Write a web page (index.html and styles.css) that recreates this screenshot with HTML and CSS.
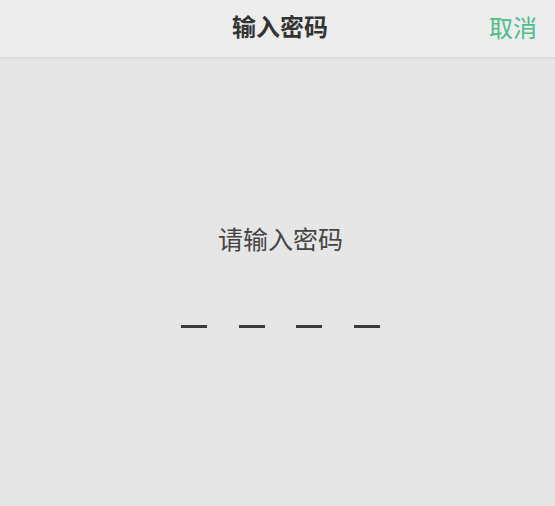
FILE: index.html
```html
<!DOCTYPE html>
<html lang="zh-CN">
<head>
<meta charset="utf-8">
<title>输入密码</title>
<link rel="stylesheet" href="styles.css">
</head>
<body>
<header class="topbar">
  <div class="topbar-side"></div>
  <h1 class="topbar-title">输入密码</h1>
  <div class="topbar-side topbar-right"><button class="cancel">取消</button></div>
</header>
<main class="content">
  <p class="prompt">请输入密码</p>
  <div class="pin">
    <span class="pin-slot"></span>
    <span class="pin-slot"></span>
    <span class="pin-slot"></span>
    <span class="pin-slot"></span>
  </div>
</main>
</body>
</html>
```

FILE: styles.css
```css
html, body {
  margin: 0;
  padding: 0;
  height: 100%;
}
body {
  background: #e6e6e6;
  font-family: "Noto Sans CJK SC", "Noto Sans", sans-serif;
}
.topbar {
  height: 58px;
  box-sizing: border-box;
  background: #ededed;
  border-bottom: 1px solid #d9d9d9;
  box-shadow: 0 1px 2px rgba(0,0,0,0.04);
  display: grid;
  grid-template-columns: 1fr auto 1fr;
  align-items: center;
  padding-left: 5px;
}
.topbar-title {
  margin: 0;
  font-size: 24px;
  font-weight: 700;
  color: #333333;
  line-height: 24px;
  padding-bottom: 6px;
}
.topbar-right {
  display: flex;
  justify-content: flex-end;
}
.cancel {
  border: 0;
  background: none;
  padding: 0 18px 0 0;
  margin: 0;
  font-family: inherit;
  font-size: 24px;
  line-height: 24px;
  color: #4dbd8b;
  padding-bottom: 3px;
}
.content {
  display: flex;
  flex-direction: column;
  align-items: center;
  padding-left: 6px;
}
.prompt {
  margin: 168px 0 0;
  font-size: 25px;
  line-height: 25px;
  color: #444444;
}
.pin {
  display: flex;
  gap: 31.5px;
  margin-top: 74px;
}
.pin-slot {
  width: 26px;
  height: 3px;
  background: #3a3a3a;
}
```
